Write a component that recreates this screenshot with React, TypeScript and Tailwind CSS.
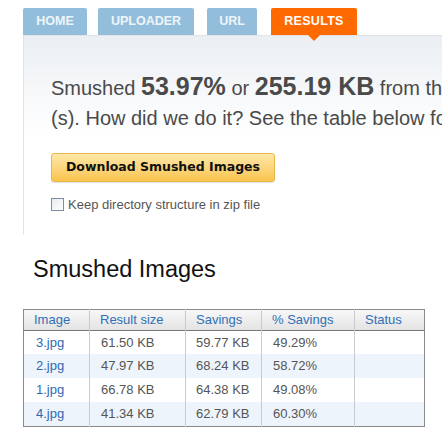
import React from 'react';

const tabs = [
  { label: 'HOME', w: 'w-[64px]', ml: '' },
  { label: 'UPLOADER', w: 'w-[96px]', ml: 'ml-[11px]' },
  { label: 'URL', w: 'w-[50px]', ml: 'ml-[13px]' },
];

const rows = [
  { name: '3.jpg', size: '61.50 KB', saved: '59.77 KB', pct: '49.29%' },
  { name: '2.jpg', size: '47.97 KB', saved: '68.24 KB', pct: '58.72%' },
  { name: '1.jpg', size: '66.78 KB', saved: '64.38 KB', pct: '49.08%' },
  { name: '4.jpg', size: '41.34 KB', saved: '62.79 KB', pct: '60.30%' },
];

const App = () => {
  return (
    <div className="w-[442px] h-[428px] overflow-hidden bg-white font-['Liberation_Sans',Arial,sans-serif]">
      {/* Tabs */}
      <div className="flex pl-[23px] pt-[8px]">
        {tabs.map((t) => (
          <div
            key={t.label}
            className={`${t.w} ${t.ml} h-[27px] rounded-t-[2px] bg-[#93bedb] flex items-center justify-center text-[12.5px] font-bold text-[#eef5fa]`}
          >
            {t.label}
          </div>
        ))}
        <div className="relative ml-[14px] w-[86px] h-[27px] rounded-t-[2px] bg-[#ff6a00] flex items-center justify-center text-[12.5px] font-bold text-white tracking-[0.3px]">
          RESULTS
          <div className="absolute left-1/2 -translate-x-1/2 top-[27px] w-0 h-0 border-l-[6px] border-r-[6px] border-t-[6px] border-l-transparent border-r-transparent border-t-[#ff6a00]" />
        </div>
      </div>

      {/* Summary panel */}
      <div className="ml-[23px] w-[800px] h-[200px] border-l border-t border-[#e0e4e8] bg-gradient-to-b from-[#ebeff3] via-white to-white pl-[27px] pt-[35px] text-[#4a4a4a]">
        <div className="whitespace-nowrap text-[20px] leading-[30px]">
          Smushed <b className="text-[25px]">53.97%</b> or <b className="text-[25px]">255.19 KB</b> from the size of your image
        </div>
        <div className="whitespace-nowrap text-[20px] leading-[30px]">
          (s). How did we do it? See the table below for details.
        </div>
        <button className="mt-[20px] w-[224px] h-[29px] rounded-[3px] border border-[#e8b94a] bg-gradient-to-b from-[#fde8a6] to-[#f9c44c] text-[12.5px] font-bold text-[#111] font-['DejaVu_Sans',sans-serif] shadow-[0_1px_1px_rgba(0,0,0,0.12)]">
          Download Smushed Images
        </button>
        <label className="mt-[13px] flex items-center gap-[4px] text-[13px] text-[#555]">
          <span className="w-[13px] h-[13px] border border-[#7a8fa6] bg-gradient-to-br from-[#e6ebf0] to-white" />
          Keep directory structure in zip file
        </label>
      </div>

      {/* Results */}
      <h2 className="pl-[33px] mt-[20px] text-[23.5px] leading-[28px] text-[#111]">Smushed Images</h2>
      <table className="ml-[23px] mt-[26px] w-[401px] table-fixed border-collapse border border-[#8a8a8a] text-[13px]">
        <colgroup>
          <col className="w-[66px]" />
          <col className="w-[96px]" />
          <col className="w-[76px]" />
          <col className="w-[93px]" />
          <col className="w-[70px]" />
        </colgroup>
        <thead>
          <tr className="h-[19px] bg-gradient-to-b from-[#f8f8f8] to-[#e3e3e3] border-b border-[#777] text-[#3170b5]">
            {['Image', 'Result size', 'Savings', '% Savings', 'Status'].map((h) => (
              <th key={h} className="text-left font-normal pl-[10px] border-r border-[#c9c9c9] last:border-r-0">
                {h}
              </th>
            ))}
          </tr>
        </thead>
        <tbody>
          {rows.map((r, i) => (
            <tr key={r.name} className={`h-[24px] ${i % 2 ? 'bg-[#eef4fb]' : 'bg-white'}`}>
              <td className="pl-[12px] text-[#2d69b3] border-r border-[#c8ccd0]">{r.name}</td>
              <td className="pl-[11px] text-[#555] border-r border-[#c8ccd0]">{r.size}</td>
              <td className="pl-[10px] text-[#555] border-r border-[#c8ccd0]">{r.saved}</td>
              <td className="pl-[11px] text-[#555] border-r border-[#c8ccd0]">{r.pct}</td>
              <td />
            </tr>
          ))}
        </tbody>
      </table>
    </div>
  );
};

export default App;
